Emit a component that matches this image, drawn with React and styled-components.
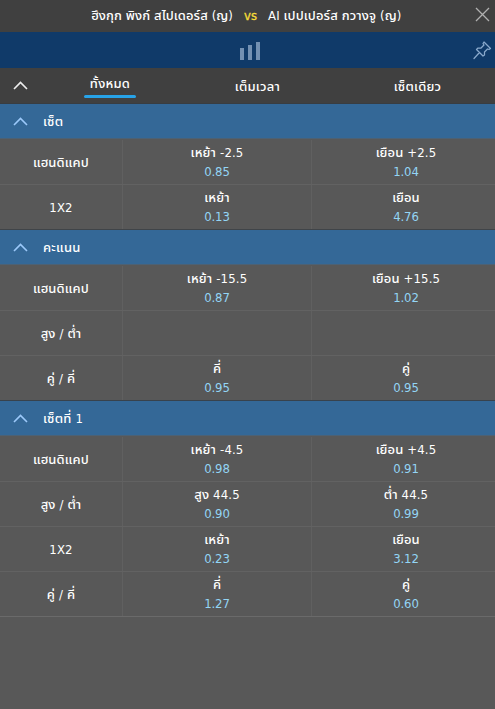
import React from "react";
import styled, { createGlobalStyle } from "styled-components";

const GlobalStyle = createGlobalStyle`
  * { box-sizing: border-box; }
  body {
    margin: 0;
    background: #585858;
    color: #fff;
    font: 13px/18px Tahoma, "DejaVu Sans Condensed", "Noto Sans", "Noto Sans Thai", sans-serif;
  }
`;

const Panel = styled.main`
  width: 495px;
  height: 709px;
  overflow: hidden;
  background: #585858;
`;

const TitleBar = styled.header`
  height: 32px;
  display: grid;
  grid-template-columns: 233px 35px 1fr 20px;
  align-items: center;
  background: #404040;
`;

const Team = styled.span`
  text-align: ${(p) => p.$align};
  white-space: nowrap;
  font-weight: 500;
  letter-spacing: ${(p) => p.$track || 0}px;
`;

const Versus = styled.span`
  text-align: center;
  color: #f6dc38;
  -webkit-text-stroke: 0.3px #f6dc38;
`;

const CloseIcon = styled.svg`
  width: 15px;
  height: 15px;
  margin-top: -3px;
  stroke: #b0b0b0;
  stroke-width: 1.3;
`;

const ToolBar = styled.div`
  height: 36px;
  display: grid;
  grid-template-columns: 240px 1fr 23px;
  align-items: center;
  background: #103a69;
`;

const ChartIcon = styled.svg`
  grid-column: 2;
  width: 21px;
  height: 20px;
  margin-top: 1px;
  fill: #7390b2;
`;

const PinIcon = styled.svg`
  width: 19px;
  height: 19px;
  margin: 1px 0 0 1px;
  fill: none;
  stroke: #8aa9cc;
  stroke-width: 1.25;
  stroke-linejoin: round;
  stroke-linecap: round;
`;

const TabBar = styled.nav`
  height: 36px;
  display: grid;
  grid-template-columns: 30px 160px 135px 185px;
  background: #404040;
  border-bottom: 1px solid #383d42;
`;

const Tab = styled.button`
  display: flex;
  flex-direction: column;
  align-items: center;
  padding: ${(p) => (p.$active ? 7 : 10)}px 0 0;
  border: 0;
  background: none;
  color: inherit;
  font: inherit;
  font-weight: 500;
  letter-spacing: 0.25px;

  &::after {
    content: "";
    display: ${(p) => (p.$active ? "block" : "none")};
    width: 52px;
    height: 3px;
    margin-top: 2px;
    border-radius: 2px;
    background: #27a3e8;
  }
`;

const Chevron = styled.svg`
  width: 15px;
  height: 9px;
  margin: ${(p) => p.$top || 0}px 0 0 13px;
  fill: none;
  stroke: ${(p) => p.$color};
  stroke-width: 1.6;
`;

const SectionHeader = styled.h2`
  height: 35px;
  margin: 0;
  display: flex;
  align-items: center;
  gap: 15px;
  font: inherit;
  background: #346897;
  border-bottom: 1px solid #4c6174;
`;

const Row = styled.div`
  height: 45px;
  display: grid;
  grid-template-columns: 123px 189px 189px;
  border-bottom: 1px solid #626262;

  &:first-of-type { height: 46px; padding-top: 1px; }
  &:last-of-type { border-bottom-color: ${(p) => p.$end}; }
`;

const Market = styled.div`
  display: grid;
  place-items: center;
  padding-top: 2px;
  border-right: 1px solid #606060;
`;

const Selection = styled.div`
  padding-top: 4px;
  text-align: center;
  border-right: 1px solid #606060;
`;

const Label = styled.div`
  height: 18px;
  line-height: 18px;
  white-space: nowrap;
  font-weight: 500;
  letter-spacing: 0.15px;
`;

const SectionTitle = styled.span`
  padding-top: 2px;
  font-weight: 500;
  letter-spacing: 0.25px;
`;

const Odds = styled(Label)`
  height: 19px;
  padding-top: 1px;
  color: #93d5f5;
  font-weight: 400;
  letter-spacing: -0.1px;
`;

const SECTIONS = [
  {
    title: "เซ็ต",
    end: "#404448",
    rows: [
      ["แฮนดิแคป", "เหย้า -2.5", "0.85", "เยือน +2.5", "1.04"],
      ["1X2", "เหย้า", "0.13", "เยือน", "4.76"],
    ],
  },
  {
    title: "คะแนน",
    end: "#38424c",
    rows: [
      ["แฮนดิแคป", "เหย้า -15.5", "0.87", "เยือน +15.5", "1.02"],
      ["สูง / ต่ำ"],
      ["คู่ / คี่", "คี่", "0.95", "คู่", "0.95"],
    ],
  },
  {
    title: "เซ็ตที่ 1",
    end: "#6a6a6a",
    rows: [
      ["แฮนดิแคป", "เหย้า -4.5", "0.98", "เยือน +4.5", "0.91"],
      ["สูง / ต่ำ", "สูง 44.5", "0.90", "ต่ำ 44.5", "0.99"],
      ["1X2", "เหย้า", "0.23", "เยือน", "3.12"],
      ["คู่ / คี่", "คี่", "1.27", "คู่", "0.60"],
    ],
  },
];

function Caret({ color, top }) {
  return (
    <Chevron viewBox="0 0 15 9" $color={color} $top={top}>
      <path d="M1 8 7.5 1.5 14 8" />
    </Chevron>
  );
}

export default function App() {
  return (
    <Panel>
      <GlobalStyle />
      <TitleBar>
        <Team $align="right" $track={0.1}>ฮึงกุก พิงก์ สไปเดอร์ส (ญ)</Team>
        <Versus>vs</Versus>
        <Team $align="left" $track={0.13}>AI เปปเปอร์ส กวางจู (ญ)</Team>
        <CloseIcon viewBox="0 0 15 15"><path d="M1 1 14 14M14 1 1 14" /></CloseIcon>
      </TitleBar>
      <ToolBar>
        <ChartIcon viewBox="0 0 21 20">
          <path d="M0 7h4v12H0zM8 4h4v15H8zM16 1h4v18h-4z" />
        </ChartIcon>
        <PinIcon viewBox="0 0 19 19">
          <path d="M11 1 17.5 7.5 16 8.5 14.5 8 11.5 11 11.5 14 10 15 3.5 8.5 5 7 8 7 11 4 10 2.5ZM6.5 11.5 1 17.5" />
        </PinIcon>
      </ToolBar>
      <TabBar>
        <Caret color="#eeeeee" top={13} />
        <Tab $active>ทั้งหมด</Tab>
        <Tab>เต็มเวลา</Tab>
        <Tab>เซ็ตเดียว</Tab>
      </TabBar>
      {SECTIONS.map((s) => (
        <section key={s.title}>
          <SectionHeader>
            <Caret color="#9cc9fa" />
            <SectionTitle>{s.title}</SectionTitle>
          </SectionHeader>
          {s.rows.map(([name, home, homeOdds, away, awayOdds], i) => (
            <Row key={i} $end={s.end}>
              <Market><Label>{name}</Label></Market>
              <Selection><Label>{home}</Label><Odds>{homeOdds}</Odds></Selection>
              <Selection><Label>{away}</Label><Odds>{awayOdds}</Odds></Selection>
            </Row>
          ))}
        </section>
      ))}
    </Panel>
  );
}
